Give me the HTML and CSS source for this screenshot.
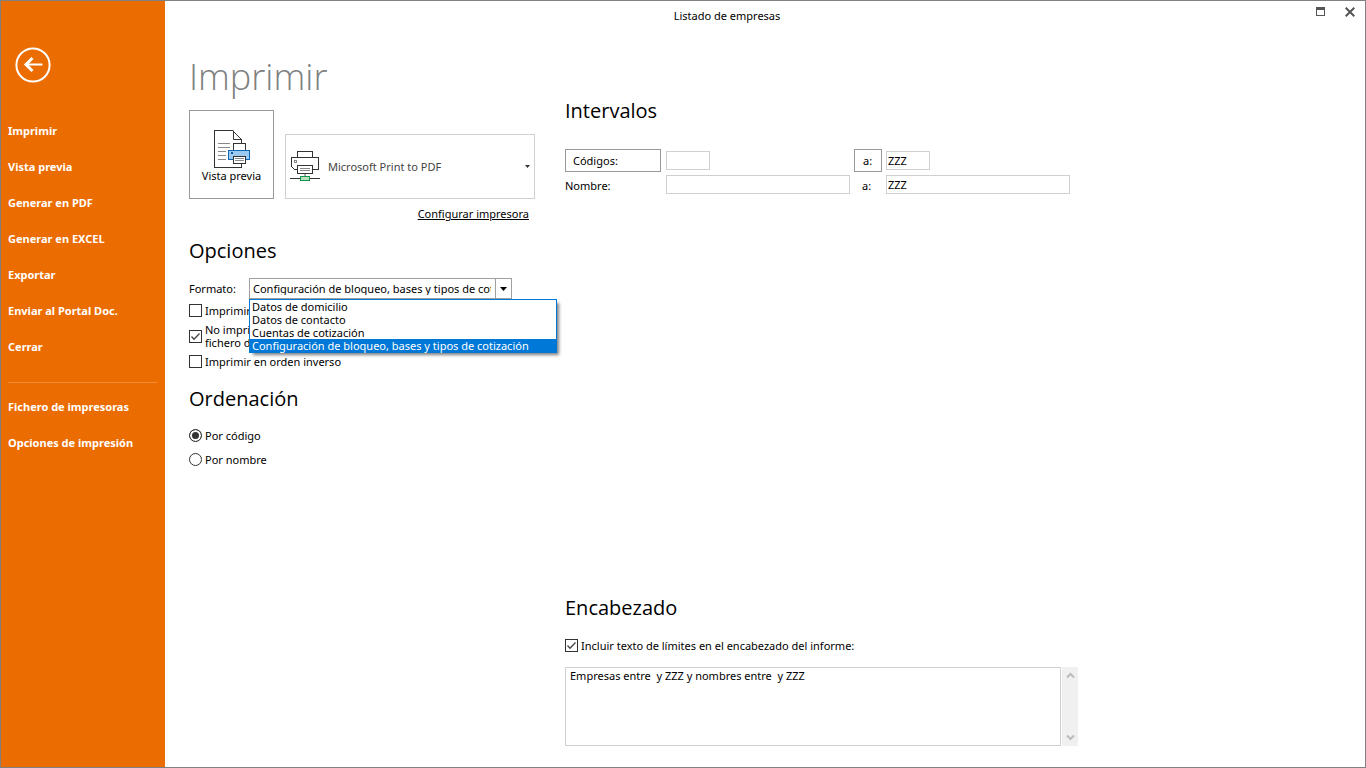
FILE: index.html
```html
<!DOCTYPE html>
<html lang="es">
<head>
<meta charset="utf-8">
<title>Listado de empresas</title>
<link rel="stylesheet" href="styles.css">
</head>
<body>
<div class="window">
  <nav class="sidebar">
    <button class="back" type="button" aria-label="Volver">
      <svg width="36" height="36" viewBox="0 0 36 36" fill="none" stroke="#fff"><circle cx="18" cy="18" r="16.600" stroke-width="2"/><path d="M10.500 17.500H27.500" stroke-width="2"/><path d="M17.500 11L11 17.500L17.500 24" stroke-width="3"/></svg>
    </button>
    <ul class="menu">
      <li><a href="#">Imprimir</a></li>
      <li><a href="#">Vista previa</a></li>
      <li><a href="#">Generar en PDF</a></li>
      <li><a href="#">Generar en EXCEL</a></li>
      <li><a href="#">Exportar</a></li>
      <li><a href="#">Enviar al Portal Doc.</a></li>
      <li><a href="#">Cerrar</a></li>
    </ul>
    <ul class="menu menu-extra">
      <li><a href="#">Fichero de impresoras</a></li>
      <li><a href="#">Opciones de impresión</a></li>
    </ul>
  </nav>
  <div class="body">
    <header class="titlebar">
      <span class="title">Listado de empresas</span>
      <div class="window-buttons">
        <button type="button" aria-label="Maximizar"><svg width="10" height="10" viewBox="0 0 10 10" shape-rendering="crispEdges"><path d="M.5 .5h8v8h-8z" fill="none" stroke="#555"/><path d="M0 0h9v3H0z" fill="#555"/></svg></button>
        <button type="button" aria-label="Cerrar ventana"><svg width="10" height="10" viewBox="0 0 10 10"><path d="M.7 .7L9.300 9.300M9.300 .7L.7 9.300" stroke="#555" stroke-width="2"/></svg></button>
      </div>
    </header>
    <main class="content">
      <div class="left">
        <h1>Imprimir</h1>
        <div class="printer-row">
          <button class="preview" type="button">
            <svg width="38" height="40" viewBox="0 0 38 40" fill="none" shape-rendering="crispEdges">
              <path d="M28.500 38.500H1.500V1.500H19.500" stroke="#333"/>
              <path d="M19.500 1.500L28.500 10.500H20.500V1.500M28.500 10V14" stroke="#333" shape-rendering="auto"/>
              <path d="M28.500 34V38.500" stroke="#333"/>
              <path d="M5 14.500H17M5 18.500H17M5 22.500H13M5 26.500H13M5 30.500H13" stroke="#888"/>
              <path d="M20.500 21V14.500H32.500V21" fill="#fff" stroke="#333"/>
              <path d="M15.500 21.500H36.500V30.500H15.500z" fill="#9cc9f0" stroke="#0d68b5"/>
              <path d="M18 23h2v2h-2z" fill="#0d5da5"/>
              <path d="M20.500 27.500H32.500V34.500H20.500z" fill="#fff" stroke="#333"/>
              <path d="M22 29.500H31M22 31.500H31" stroke="#888"/>
            </svg>
            <span>Vista previa</span>
          </button>
          <button class="printer" type="button">
            <svg width="30" height="31" viewBox="0 0 30 31" fill="none" shape-rendering="crispEdges">
              <path d="M7.500 6V.5H22.500V6" stroke="#333"/>
              <path d="M7 18.500H4.500L1.500 15.500V6.500H28.500V18.500H22" stroke="#333"/>
              <path d="M4.500 9.500h2v2h-2z" stroke="#888"/>
              <path d="M7.500 14.500H22.500V22.500H7.500z" fill="#fff" stroke="#333"/>
              <path d="M10 17.500H20M10 19.500H20" stroke="#888"/>
              <path d="M15 23V25" stroke="#aaa" stroke-width="2"/>
              <path d="M0 27.500H30" stroke="#333"/>
              <path d="M10.500 25.500H19.500V29.500H10.500z" fill="#b8dfc0" stroke="#109648"/>
            </svg>
            <span>Microsoft Print to PDF</span>
            <svg class="caret" width="5" height="3" viewBox="0 0 5 3"><path d="M0 0H5L2.500 3z" fill="#333"/></svg>
          </button>
        </div>
        <a class="configure" href="#">Configurar impresora</a>

        <h2>Opciones</h2>
        <div class="format">
          <label for="format">Formato:</label>
          <div class="combo">
            <select id="format">
              <option>Datos de domicilio</option>
              <option>Datos de contacto</option>
              <option>Cuentas de cotización</option>
              <option selected>Configuración de bloqueo, bases y tipos de cotización</option>
            </select>
            <span class="combo-arrow"><svg width="7" height="4" viewBox="0 0 7 4"><path d="M0 0H7L3.500 4z" fill="#000"/></svg></span>
            <ul class="dropdown" role="listbox" aria-label="Formato">
              <li role="option">Datos de domicilio</li>
              <li role="option">Datos de contacto</li>
              <li role="option">Cuentas de cotización</li>
              <li role="option" class="active" aria-selected="true">Configuración de bloqueo, bases y tipos de cotización</li>
            </ul>
          </div>
        </div>
        <div class="checks">
          <label class="check"><input type="checkbox"><span>Imprimir</span></label>
          <label class="check"><input type="checkbox" checked><span>No imprimir<br>fichero de</span></label>
          <label class="check"><input type="checkbox"><span>Imprimir en orden inverso</span></label>
        </div>

        <h2>Ordenación</h2>
        <div class="radios">
          <label class="check"><input type="radio" name="order" checked><span>Por código</span></label>
          <label class="check"><input type="radio" name="order"><span>Por nombre</span></label>
        </div>
      </div>

      <div class="right">
        <section>
          <h2>Intervalos</h2>
          <div class="ranges">
            <button class="range-button from" type="button">Códigos:</button>
            <input class="short" type="text" aria-label="Código desde">
            <button class="range-button to" type="button">a:</button>
            <input class="short" type="text" aria-label="Código hasta" value="ZZZ">
            <label for="name-from">Nombre:</label>
            <input id="name-from" type="text">
            <label class="to" for="name-to">a:</label>
            <input id="name-to" type="text" value="ZZZ">
          </div>
        </section>
        <section class="heading-section">
          <h2>Encabezado</h2>
          <label class="check"><input type="checkbox" checked><span>Incluir texto de límites en el encabezado del informe:</span></label>
          <div class="memo">
            <textarea aria-label="Texto del encabezado">Empresas entre  y ZZZ y nombres entre  y ZZZ</textarea>
            <div class="scroll">
              <svg width="9" height="7" viewBox="0 0 9 7" fill="none" stroke="#bbb" stroke-width="2"><path d="M1 5.500L4.500 2L8 5.500"/></svg>
              <svg width="9" height="7" viewBox="0 0 9 7" fill="none" stroke="#bbb" stroke-width="2"><path d="M1 1.500L4.500 5L8 1.500"/></svg>
            </div>
          </div>
        </section>
      </div>
    </main>
  </div>
</div>
</body>
</html>
```
FILE: styles.css
```css
* { box-sizing: border-box; }

body {
  margin: 0;
  background: #fff;
  color: #000;
  font: 11px/13px "Noto Sans", "Open Sans", sans-serif;
}

button, input, select, textarea {
  font: inherit;
  color: inherit;
  margin: 0;
  border-radius: 0;
}

button { background: #fff; padding: 0; }

ul { list-style: none; margin: 0; padding: 0; }

h1, h2 { margin: 0; font-weight: 400; }

h1 {
  font: 350 36px/44px "Open Sans", "Noto Sans", sans-serif;
  color: #808080;
}

h2 { font: 400 20px/28px "Open Sans", "Noto Sans", sans-serif; }

.window {
  display: flex;
  min-height: 100vh;
  border: 1px solid #808080;
}

.sidebar {
  flex: 0 0 164px;
  background: #eb6c00;
  padding: 46px 7px 0;
}

.back {
  display: block;
  margin-left: 7px;
  width: 36px;
  height: 36px;
  border: 0;
  background: none;
}

.menu { padding-top: 30px; }

.menu a {
  display: block;
  color: #fff;
  font-size: 11px;
  font-weight: 700;
  line-height: 36px;
  text-decoration: none;
  white-space: nowrap;
}

.menu-extra {
  margin-top: 17px;
  padding-top: 6px;
  border-top: 1px solid #f08a34;
}

.body {
  flex: 1;
  display: flex;
  flex-direction: column;
  min-width: 0;
}

.titlebar {
  display: flex;
  height: 30px;
  padding-right: 9px;
}

.title { flex: 1; text-align: center; line-height: 30px; }

.window-buttons {
  display: flex;
  align-items: center;
  justify-content: flex-end;
  gap: 18px;
  width: 67px;
  height: 22px;
}

.window-buttons button {
  display: flex;
  width: 11px;
  border: 0;
}

.content {
  flex: 1;
  display: grid;
  grid-template-columns: 346px minmax(0, 1fr);
  gap: 30px;
  padding: 24px 24px 21px;
}

.printer-row {
  display: flex;
  align-items: flex-end;
  gap: 11px;
  margin-top: 11px;
}

.preview {
  display: flex;
  flex-direction: column;
  align-items: center;
  justify-content: center;
  width: 85px;
  height: 89px;
  padding-top: 1px;
  border: 1px solid #999;
}

.printer {
  display: flex;
  align-items: center;
  gap: 8px;
  width: 250px;
  height: 65px;
  padding: 0 4px;
  border: 1px solid #d0d0d0;
  color: #444;
}

.caret { margin-left: auto; }

.configure {
  display: block;
  margin: 7px 6px 0 0;
  color: #000;
  line-height: 16px;
  text-align: right;
}

.left h2 { margin-top: 15px; }

.format {
  display: flex;
  align-items: center;
  margin-top: 13px;
}

.format label { width: 60px; }

.combo { position: relative; width: 263px; }

.combo select {
  display: block;
  width: 100%;
  height: 21px;
  padding: 0 20px 0 3px;
  border: 1px solid #a0a0a0;
  background: #fff;
  appearance: none;
}

.combo-arrow {
  position: absolute;
  inset: 0 0 0 auto;
  display: flex;
  align-items: center;
  justify-content: center;
  width: 17px;
  border: 1px solid #a0a0a0;
  pointer-events: none;
}

.dropdown {
  position: absolute;
  top: 100%;
  left: 0;
  z-index: 1;
  width: 308px;
  border: 1px solid #0078d7;
  background: #fff;
  box-shadow: 3px 3px 3px -1px rgba(0, 0, 0, .5);
  white-space: nowrap;
}

.dropdown li { padding-left: 2px; }
.dropdown .active { background: #0078d7; color: #fff; }

.checks {
  display: grid;
  gap: 6px;
  margin-top: 5px;
  padding-bottom: 2px;
}

.check {
  display: flex;
  align-items: center;
  gap: 3px;
}

.check input {
  flex: none;
  appearance: none;
  width: 13px;
  height: 13px;
  border: 1px solid #333;
  background: #fff;
}

.check input[type="checkbox"]:checked {
  background: #fff url("data:image/svg+xml,%3Csvg xmlns='http://www.w3.org/2000/svg' width='11' height='11' fill='none' stroke='%23444' stroke-width='1.3'%3E%3Cpath d='M1.500 5.500L4 8.200L9.500 2.500'/%3E%3C/svg%3E") center no-repeat;
}

.check input[type="radio"] { border-radius: 50%; }

.check input[type="radio"]:checked {
  background: #333;
  box-shadow: inset 0 0 0 2px #fff;
}

.radios {
  display: grid;
  gap: 11px;
  margin-top: 16px;
}

.right {
  display: flex;
  flex-direction: column;
  justify-content: space-between;
  padding-top: 42px;
}

.ranges {
  display: grid;
  grid-template-columns: 97px 184px 28px 184px;
  align-items: center;
  column-gap: 4px;
  row-gap: 3px;
  margin-top: 24px;
}

.range-button {
  height: 23px;
  padding: 0 7px;
  border: 1px solid #999;
  text-align: left;
}

.range-button.from { width: 96px; }

.ranges label { padding-top: 2px; }

.ranges .to { padding-left: 8px; }

.ranges input {
  width: 100%;
  height: 19px;
  padding: 0 1px;
  border: 1px solid #d0d0d0;
}

.ranges .short { width: 44px; }

.heading-section h2 { margin-bottom: 17px; }

.memo {
  display: flex;
  gap: 1px;
  max-width: 513px;
  height: 79px;
  margin-top: 15px;
}

.memo textarea {
  flex: 1;
  padding: 1px 4px;
  border: 1px solid #d0d0d0;
  resize: none;
  overflow: hidden;
}

.scroll {
  display: flex;
  flex-direction: column;
  align-items: center;
  justify-content: space-between;
  width: 16px;
  padding: 5px 0;
  background: #f0f0f0;
}
```
